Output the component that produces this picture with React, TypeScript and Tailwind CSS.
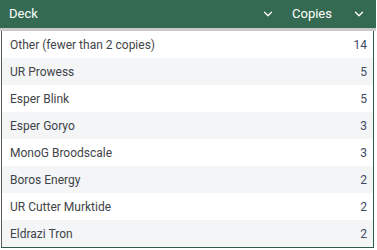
import { ChevronDown } from "lucide-react";

const rows = [
  { deck: "Other (fewer than 2 copies)", copies: 14 },
  { deck: "UR Prowess", copies: 5 },
  { deck: "Esper Blink", copies: 5 },
  { deck: "Esper Goryo", copies: 3 },
  { deck: "MonoG Broodscale", copies: 3 },
  { deck: "Boros Energy", copies: 2 },
  { deck: "UR Cutter Murktide", copies: 2 },
  { deck: "Eldrazi Tron", copies: 2 },
];

export default function App() {
  return (
    <div className="w-[376px] bg-white font-['Roboto',sans-serif]">
      {/* header */}
      <div className="flex h-[28px] items-center bg-[#356a52] text-[13px] text-white">
        <div className="flex w-[283px] items-center justify-between pl-[9px] pr-[8px]">
          <span>Deck</span>
          <ChevronDown className="h-[14px] w-[14px]" strokeWidth={2.2} />
        </div>
        <div className="flex flex-1 items-center justify-between pl-[9px] pr-[10px]">
          <span>Copies</span>
          <ChevronDown className="h-[14px] w-[14px]" strokeWidth={2.2} />
        </div>
      </div>
      <div className="h-[3px] bg-[#c9c9c9]" />
      <div className="ml-px mr-[2px] border-x border-b border-x-[#2f5a46] border-b-[#2f5a46] border-l-[#55605a]">
        {rows.map((r, i) => (
          <div
            key={r.deck}
            className={`flex h-[27px] items-center justify-between pl-[8px] pr-[6px] text-[12px] ${
              i % 2 === 0 ? "bg-white" : "bg-[#f4f5f7]"
            }`}
          >
            <span className="text-[#3f4448]">{r.deck}</span>
            <span className="text-[#3d4a63]">{r.copies}</span>
          </div>
        ))}
      </div>
    </div>
  );
}
